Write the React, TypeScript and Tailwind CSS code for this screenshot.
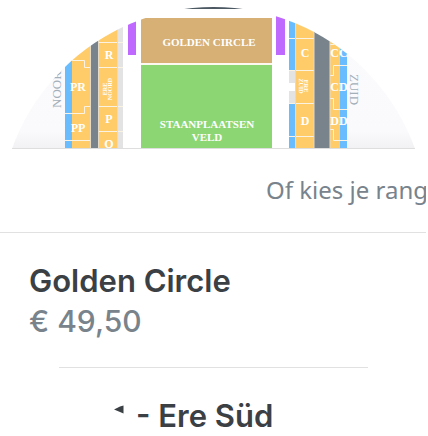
type Block = { x: number; y: number; w: number; h: number; fill: string };

const YELLOW = "#ffcc69";
const BLUE = "#69bdff";
const SLATE = "#78838c";
const GREY = "#e3e3e3";
const PURPLE = "#bf69ff";

const blocks: Block[] = [
  { x: 160, y: 0, w: 110, h: 9, fill: "#4c5862" },
  { x: 65, y: 0, w: 7, h: 149, fill: BLUE },
  { x: 72, y: 0, w: 18, h: 149, fill: YELLOW },
  { x: 91, y: 0, w: 7, h: 149, fill: SLATE },
  { x: 99, y: 0, w: 18, h: 149, fill: YELLOW },
  { x: 117, y: 0, w: 6, h: 149, fill: GREY },
  { x: 128, y: 0, w: 8, h: 55, fill: PURPLE },
  { x: 141, y: 18, w: 131, h: 45, fill: "#d6b074" },
  { x: 141, y: 65, w: 131, h: 84, fill: "#8cd674" },
  { x: 276, y: 16, w: 9, h: 39, fill: PURPLE },
  { x: 289, y: 0, w: 6, h: 70, fill: BLUE },
  { x: 289, y: 71, w: 6, h: 12, fill: GREY },
  { x: 289, y: 91, w: 6, h: 12, fill: GREY },
  { x: 289, y: 104, w: 6, h: 45, fill: BLUE },
  { x: 296, y: 0, w: 18, h: 149, fill: YELLOW },
  { x: 314, y: 0, w: 16, h: 149, fill: SLATE },
  { x: 330, y: 0, w: 10, h: 149, fill: YELLOW },
  { x: 340, y: 0, w: 7, h: 149, fill: BLUE },
];

const seams = [
  "M65 60.5H84.5V67.5H91",
  "M65 113.5H84.5V106.5H91",
  "M65 140.5H91",
  "M98 42.5H123M98 67.5H123M98 106.5H123M98 131.5H123",
  "M289 38.5H314M289 70.5H314M289 103.5H314M289 136.5H314",
  "M330 44.5H337M347 65.5H333.5V75.5H330",
  "M330 98.5H333.5V109.5H347M330 129.5H333.5V140.5H347",
  "M141 64H272",
];

const labels = [
  { x: 78, y: 91, text: "PR" },
  { x: 78, y: 132, text: "PP" },
  { x: 109, y: 59, text: "R" },
  { x: 109, y: 123, text: "P" },
  { x: 109, y: 148, text: "O" },
  { x: 305, y: 57, text: "C" },
  { x: 305, y: 125, text: "D" },
  { x: 339, y: 57, text: "CC" },
  { x: 339, y: 91, text: "CD" },
  { x: 339, y: 125, text: "DD" },
];

const fieldLabels = [
  { x: 209, y: 46, text: "GOLDEN CIRCLE" },
  { x: 207, y: 128, text: "STAANPLAATSEN" },
  { x: 207, y: 141, text: "VELD" },
];

const SERIF = "'Liberation Serif', serif";

function SeatMap() {
  return (
    <svg viewBox="0 0 428 149" className="block h-auto w-full" role="img" aria-label="Plattegrond">
      <defs>
        <clipPath id="bowl">
          <circle cx="213.5" cy="221" r="214" />
        </clipPath>
        <linearGradient id="shade" x1="0" x2="0" y1="0" y2="1">
          <stop offset="0" stopColor="#fbfbfe" />
          <stop offset="0.88" stopColor="#fafafd" />
          <stop offset="1" stopColor="#f1f1f3" />
        </linearGradient>
      </defs>
      <g clipPath="url(#bowl)">
        <rect width="65" height="149" fill="url(#shade)" />
        <rect x="347" width="81" height="149" fill="url(#shade)" />
        {blocks.map((b, i) => (
          <rect key={i} x={b.x} y={b.y} width={b.w} height={b.h} fill={b.fill} />
        ))}
        <g fill="none" stroke="#faf3e4" strokeWidth="1">
          {seams.map((d) => (
            <path key={d} d={d} />
          ))}
        </g>
        <path
          d="M90.5 0V149M98.5 0V149M117.5 0V149M295.5 0V149M314 0V149M330 0V149"
          stroke="#e5dac5"
          strokeWidth="1"
        />
        <g fill="#fff" fontFamily={SERIF} fontWeight="700" textAnchor="middle">
          <g fontSize="12">
            {labels.map((l) => (
              <text key={l.text} x={l.x} y={l.y}>
                {l.text}
              </text>
            ))}
          </g>
          <g fontSize="11">
            {fieldLabels.map((l) => (
              <text key={l.text} x={l.x} y={l.y}>
                {l.text}
              </text>
            ))}
          </g>
          <g fontSize="6">
            <text transform="translate(107 89) rotate(-90)">ERE</text>
            <text transform="translate(112 89) rotate(-90)">NOORD</text>
            <text transform="translate(304 86) rotate(90)">ERE</text>
            <text transform="translate(299 86) rotate(90)">ZUID</text>
          </g>
        </g>
        <g fill="#a3afb9" fontFamily={SERIF} fontSize="13">
          <text transform="translate(61 108) rotate(-90)">NOORD</text>
          <text transform="translate(350 74) rotate(90)">ZUID</text>
        </g>
        <path d="M0 148.5H428" stroke="#dedede" />
      </g>
    </svg>
  );
}

export default function App() {
  return (
    <main className="overflow-hidden bg-white pr-0.5 font-['Inter',sans-serif] text-[#3b4045]">
      <div className="-mr-0.5">
        <SeatMap />
      </div>
      <div className="overflow-hidden border-b border-[#e1e1e1] pt-[23px] pb-6 pl-[266px]">
        <p className="font-['Noto_Sans',sans-serif] text-2xl leading-9 whitespace-nowrap text-[#78838c]">Of kies je rang</p>
      </div>
      <section className="px-[29px] pt-7">
        <h2 className="text-[31px] leading-10 font-semibold">Golden Circle</h2>
        <p className="text-[30px] leading-10 font-medium text-[#78838c]">€ 49,50</p>
      </section>
      <hr className="mt-[26px] mr-[58px] ml-[59px] border-[#e1e1e1]" />
      <section className="flex pt-7 pl-[114px]">
        <svg viewBox="0 0 10 9" className="mt-[9px] mr-3 h-[9px] w-2.5" aria-hidden="true">
          <path d="M0 4.500L6 1.500L9.500 0.500V8.500L6 7Z" fill="#3b4045" />
        </svg>
        <h2 className="text-[31px] leading-10 font-semibold whitespace-nowrap">- Ere Süd</h2>
      </section>
    </main>
  );
}
